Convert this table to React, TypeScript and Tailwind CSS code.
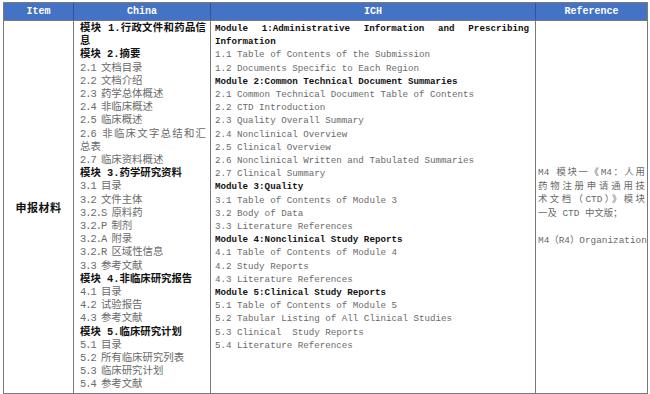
import React from 'react';

type Line = { t: string; b?: boolean; j?: boolean };

const mono = "font-['Liberation_Mono','Noto_Sans_CJK_SC',monospace]";

const china: Line[] = [
  { t: '模块 1.行政文件和药品信', b: true, j: true },
  { t: '息', b: true },
  { t: '模块 2.摘要', b: true },
  { t: '2.1 文档目录' },
  { t: '2.2 文档介绍' },
  { t: '2.3 药学总体概述' },
  { t: '2.4 非临床概述' },
  { t: '2.5 临床概述' },
  { t: '2.6 非临床文字总结和汇', j: true },
  { t: '总表' },
  { t: '2.7 临床资料概述' },
  { t: '模块 3.药学研究资料', b: true },
  { t: '3.1 目录' },
  { t: '3.2 文件主体' },
  { t: '3.2.S 原料药' },
  { t: '3.2.P 制剂' },
  { t: '3.2.A 附录' },
  { t: '3.2.R 区域性信息' },
  { t: '3.3 参考文献' },
  { t: '模块 4.非临床研究报告', b: true },
  { t: '4.1 目录' },
  { t: '4.2 试验报告' },
  { t: '4.3 参考文献' },
  { t: '模块 5.临床研究计划', b: true },
  { t: '5.1 目录' },
  { t: '5.2 所有临床研究列表' },
  { t: '5.3 临床研究计划' },
  { t: '5.4 参考文献' },
];

const ich: Line[] = [
  { t: 'Module 1:Administrative Information and Prescribing', b: true, j: true },
  { t: 'Information', b: true },
  { t: '1.1 Table of Contents of the Submission' },
  { t: '1.2 Documents Specific to Each Region' },
  { t: 'Module 2:Common Technical Document Summaries', b: true },
  { t: '2.1 Common Technical Document Table of Contents' },
  { t: '2.2 CTD Introduction' },
  { t: '2.3 Quality Overall Summary' },
  { t: '2.4 Nonclinical Overview' },
  { t: '2.5 Clinical Overview' },
  { t: '2.6 Nonclinical Written and Tabulated Summaries' },
  { t: '2.7 Clinical Summary' },
  { t: 'Module 3:Quality', b: true },
  { t: '3.1 Table of Contents of Module 3' },
  { t: '3.2 Body of Data' },
  { t: '3.3 Literature References' },
  { t: 'Module 4:Nonclinical Study Reports', b: true },
  { t: '4.1 Table of Contents of Module 4' },
  { t: '4.2 Study Reports' },
  { t: '4.3 Literature References' },
  { t: 'Module 5:Clinical Study Reports', b: true },
  { t: '5.1 Table of Contents of Module 5' },
  { t: '5.2 Tabular Listing of All Clinical Studies' },
  { t: '5.3 Clinical\u00a0\u00a0Study Reports' },
  { t: '5.4 Literature References' },
];

const refLines: Line[] = [
  { t: 'M4 模块一《M4：人用', j: true },
  { t: '药物注册申请通用技', j: true },
  { t: '术文档（CTD）》模块', j: true },
  { t: '一及 CTD 中文版；' },
  { t: '\u00a0' },
  { t: 'M4（R4）Organization' },
];

function Lines({ lines, split }: { lines: Line[]; split?: boolean }) {
  return (
    <>
      {lines.map((l, i) => {
        // numbering like "3.2.S " is set a bit narrower, as in the source table
        const m = split ? l.t.match(/^[0-9.A-Z ]+/) : null;
        const head = m ? m[0] : '';
        const rest = l.t.slice(head.length);
        return (
          <div
            key={i}
            className={
              'whitespace-pre ' +
              (l.b ? 'font-bold text-[#111111] ' : 'text-[#6a6a6a] ') +
              (l.j ? 'text-justify [text-align-last:justify] whitespace-normal' : '')
            }
          >
            {head && <span className="tracking-[-1px]">{head}</span>}
            {rest}
          </div>
        );
      })}
    </>
  );
}

const head = `h-[17px] bg-[#4472c4] text-white text-[10px] font-bold flex items-center justify-center ${mono}`;

export default function App() {
  return (
    <div className="w-[650px] h-[394px] bg-white pt-[2px] pl-[3px]">
      <div className="w-[645px] border border-[#7a7a7a] grid grid-cols-[69px_137px_325px_112px]">
        <div className={head}>Item</div>
        <div className={`${head} border-l border-[#2f5597]`}>China</div>
        <div className={`${head} border-l border-[#2f5597]`}>ICH</div>
        <div className={`${head} border-l border-[#2f5597]`}>Reference</div>

        <div className="border-t border-[#7a7a7a] flex items-center justify-center">
          <span className="font-['Noto_Sans_CJK_SC',sans-serif] font-bold text-[11px] text-[#111111] tracking-[0.5px]">申报材料</span>
        </div>
        <div className={`border-t border-l border-[#7a7a7a] pl-[6px] pr-[4px] pt-[1px] pb-[1px] text-[10.4px] leading-[13.2px] ${mono}`}>
          <Lines lines={china} split />
        </div>
        <div className={`border-t border-l border-[#7a7a7a] pl-[4px] pr-[6px] pt-[1px] text-[9.2px] leading-[13.2px] ${mono}`}>
          <Lines lines={ich} />
        </div>
        <div className={`border-t border-l border-[#7a7a7a] pl-[2px] pr-[2px] flex flex-col justify-center text-[9.4px] leading-[13.5px] ${mono}`}>
          <Lines lines={refLines} />
        </div>
      </div>
    </div>
  );
}
